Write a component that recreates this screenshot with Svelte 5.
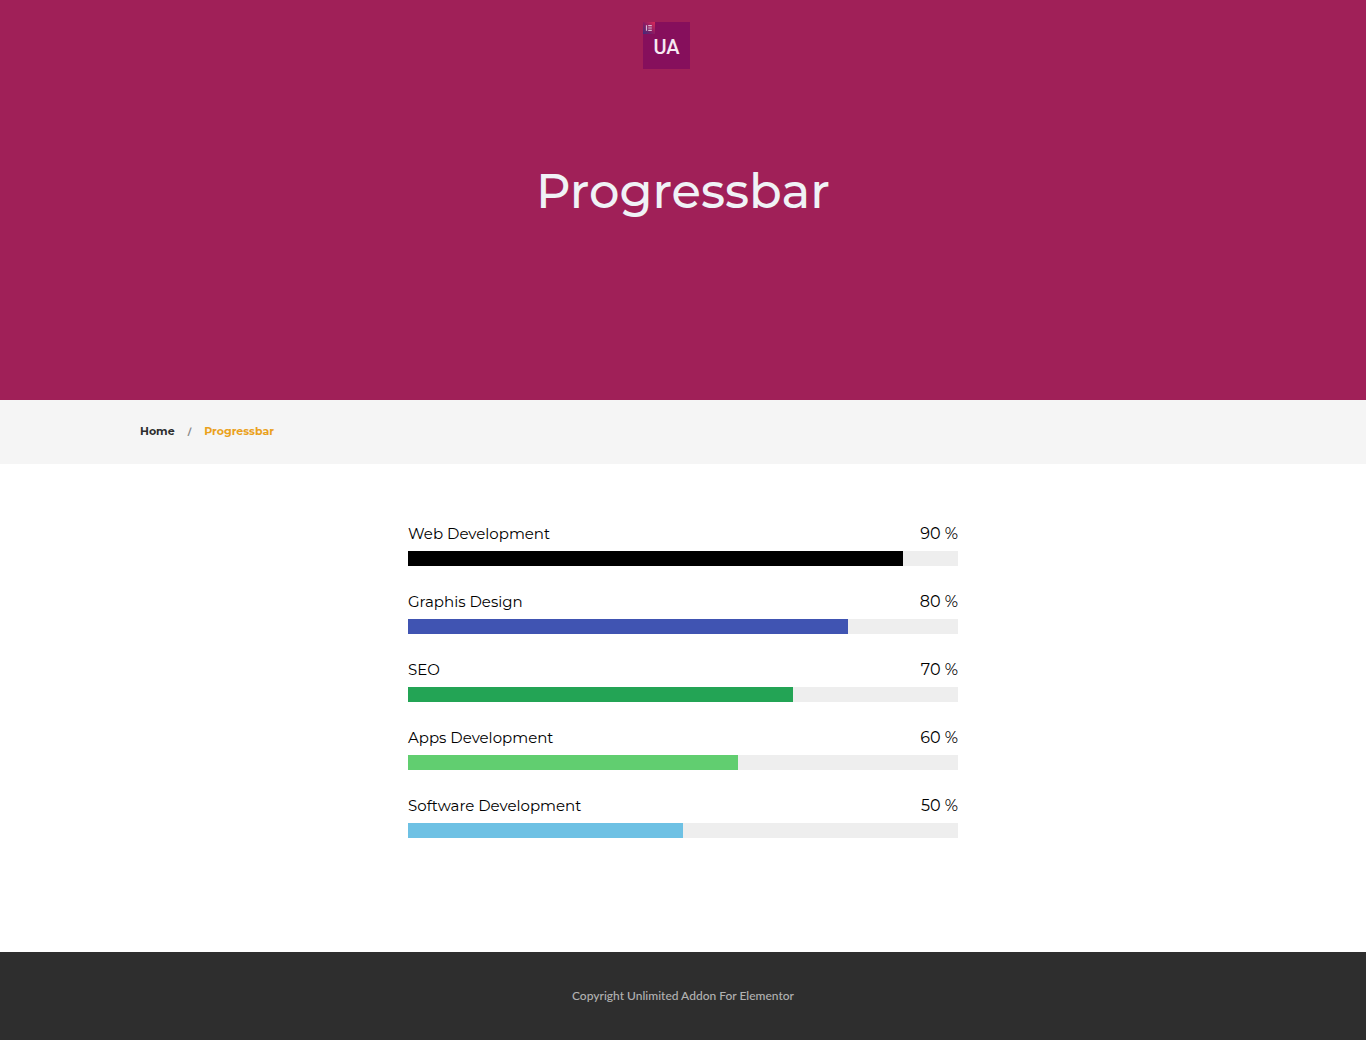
<script>
  const skills = [
    { id: 'web', name: 'Web Development', value: 90, tone: 'black' },
    { id: 'graphic', name: 'Graphis Design', value: 80, tone: 'indigo' },
    { id: 'seo', name: 'SEO', value: 70, tone: 'green' },
    { id: 'apps', name: 'Apps Development', value: 60, tone: 'lime' },
    { id: 'software', name: 'Software Development', value: 50, tone: 'sky' }
  ];
</script>

<div class="page">
  <header class="hero">
    <a class="logo" href="#home" aria-label="Unlimited Addon home">
      <svg viewBox="0 0 47 47" width="47" height="47" aria-hidden="true">
        <defs>
          <linearGradient id="badge" x1="0" y1="1" x2="1" y2="0">
            <stop offset="0" stop-color="#3b2c7c" />
            <stop offset="0.5" stop-color="#8e1c62" />
            <stop offset="1" stop-color="#dc2a58" />
          </linearGradient>
        </defs>
        <rect width="47" height="47" fill="#860f5c" />
        <rect width="12" height="12" fill="url(#badge)" />
        <path d="M3.5 3.2V8.8M5.2 3.7H8.8M5.2 6H8.8M5.2 8.3H8.8" fill="none" stroke="#d9b9d2" stroke-width="1.2" />
        <text x="23.5" y="32" text-anchor="middle">UA</text>
      </svg>
    </a>
    <h1>Progressbar</h1>
  </header>

  <nav class="crumbs" aria-label="Breadcrumb">
    <ol>
      <li><a href="#home">Home</a></li>
      <li class="slash" aria-hidden="true">/</li>
      <li class="current" aria-current="page">Progressbar</li>
    </ol>
  </nav>

  <main>
    <section class="skills">
      {#each skills as skill (skill.id)}
        <div class="skill">
          <div class="caption">
            <span class="name" id={skill.id}>{skill.name}</span>
            <span>{skill.value} %</span>
          </div>
          <div class="track" role="progressbar" aria-labelledby={skill.id} aria-valuenow={skill.value} aria-valuemin="0" aria-valuemax="100">
            <div class="fill {skill.tone}" style="width: {skill.value}%"></div>
          </div>
        </div>
      {/each}
    </section>
  </main>

  <footer>Copyright Unlimited Addon For Elementor</footer>
</div>

<style>
  :global(body) {
    margin: 0;
    background: #fff;
  }

  .page {
    display: flex;
    flex-direction: column;
    min-height: 100vh;
    font-family: Metropolis, Montserrat, Inter, sans-serif;
    color: #000;
  }

  .hero {
    display: flex;
    flex-direction: column;
    align-items: center;
    box-sizing: border-box;
    min-height: 400px;
    padding: 22px 20px;
    background: #a02058;
  }

  .logo {
    display: block;
    margin-right: 33px;
  }

  .logo svg {
    display: block;
  }

  .logo text {
    font: 500 20px Roboto, sans-serif;
    fill: #f6e9f2;
  }

  h1 {
    margin: 92px 0 0;
    font-size: 48px;
    line-height: 60px;
    font-weight: 500;
    color: #f0f2f6;
  }

  .crumbs {
    background: #f5f5f5;
  }

  .crumbs ol {
    display: flex;
    align-items: center;
    gap: 13px;
    box-sizing: border-box;
    max-width: 1126px;
    height: 64px;
    margin: 0 auto;
    padding: 0 20px 2px;
    list-style: none;
    font-size: 11px;
    line-height: 16px;
    font-weight: 700;
  }

  .crumbs a {
    color: #2d2d2d;
    text-decoration: none;
  }

  .slash {
    padding-top: 2px;
    color: #888;
    font-size: 9px;
  }

  .current {
    color: #eaa11c;
  }

  main {
    flex: 1;
    padding: 58px 20px 60px;
  }

  .skills {
    display: flex;
    flex-direction: column;
    gap: 24px;
    max-width: 550px;
    margin: 0 auto;
  }

  .caption {
    display: flex;
    justify-content: space-between;
    padding-bottom: 5px;
    font-size: 16px;
    line-height: 24px;
  }

  .name {
    font-size: 15px;
  }

  .track {
    height: 15px;
    background: #eee;
  }

  .fill {
    height: 100%;
  }

  .black { background: #000; }
  .indigo { background: #4054b2; }
  .green { background: #23a455; }
  .lime { background: #61ce70; }
  .sky { background: #6ec1e4; }

  footer {
    padding: 32px 20px;
    background: #2e2e2e;
    color: #b2b2b2;
    font: 500 12px/24px Lato, sans-serif;
    text-align: center;
  }
</style>
